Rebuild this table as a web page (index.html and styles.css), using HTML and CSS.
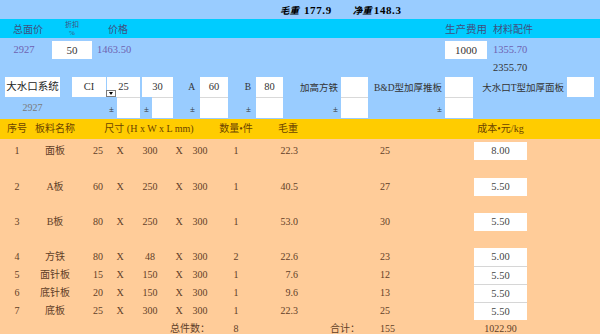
FILE: index.html
```html
<!DOCTYPE html>
<html lang="zh">
<head>
<meta charset="utf-8">
<title>模具报价</title>
<link rel="stylesheet" href="styles.css">
</head>
<body>
<div class="page">
  <div class="weights">
    <span class="wlabel">毛重</span><span class="wval">177.9</span>
    <span class="wlabel l2">净重</span><span class="wval">148.3</span>
  </div>

  <div class="pgrid price-head">
    <div class="c-total">总面价</div>
    <div class="c-disc"><span class="disc">折扣</span><span class="disc">%</span></div>
    <div class="c-price head-price">价格</div>
    <div class="c-prod">生产费用</div>
    <div class="c-mat">材料配件</div>
  </div>

  <div class="pgrid price-vals">
    <div class="c-total purple">2927</div>
    <div class="c-disc"><div class="box pbox w40">50</div></div>
    <div class="c-price purple">1463.50</div>
    <div class="c-prod"><div class="box pbox w42">1000</div></div>
    <div class="c-mat purple">1355.70</div>
  </div>

  <div class="pgrid price-sum">
    <div class="c-mat">2355.70</div>
  </div>

  <div class="form">
    <div class="fcell g1 r1"><div class="box sys">大水口系统</div></div>
    <div class="fcell g2 r1"><div class="box w34 sel">CI<span class="dd"></span></div></div>
    <div class="fcell g3 r1"><div class="box w33">25</div></div>
    <div class="fcell g4 r1"><div class="box w31">30</div></div>
    <div class="fcell g5 r1"><span class="lbl">A</span><div class="box w28">60</div></div>
    <div class="fcell g6 r1"><span class="lbl">B</span><div class="box w27">80</div></div>
    <div class="fcell g7 r1"><span class="lbl">加高方铁</span><div class="box w27"></div></div>
    <div class="fcell g8 r1"><span class="lbl">B&amp;D型加厚推板</span><div class="box w28"></div></div>
    <div class="fcell g9 r1"><span class="lbl">大水口T型加厚面板</span><div class="box w27"></div></div>

    <div class="fcell g1 r2 center"><span class="gray">2927</span></div>
    <div class="fcell g3 r2"><span class="pm">±</span><div class="box w23 lower"></div></div>
    <div class="fcell g4 r2"><span class="pm">±</span><div class="box w21 lower"></div></div>
    <div class="fcell g5 r2"><span class="pm">±</span><div class="box w28 lower"></div></div>
    <div class="fcell g6 r2"><span class="pm">±</span><div class="box w27 lower"></div></div>
    <div class="fcell g7 r2"><span class="pm">±</span><div class="box w27 lower"></div></div>
    <div class="fcell g8 r2"><span class="pm">±</span><div class="box w28 lower"></div></div>
  </div>

  <div class="tbl">
    <div class="trow thead">
      <div class="c1">序号</div>
      <div class="c2">板料名称</div>
      <div class="csize">尺寸 (H x W x L mm)</div>
      <div class="c9">数量•件</div>
      <div class="c10">毛重</div>
      <div class="c14">成本•元/kg</div>
    </div>

    <div class="trow tall h35">
      <div class="c1">1</div><div class="c2">面板</div>
      <div class="c4">25</div><div class="c5">X</div><div class="c6">300</div><div class="c7">X</div><div class="c8">300</div>
      <div class="c9">1</div><div class="c10">22.3</div><div class="c12">25</div>
      <div class="c14"><div class="cbox">8.00</div></div>
    </div>
    <div class="trow tall h36">
      <div class="c1">2</div><div class="c2">A板</div>
      <div class="c4">60</div><div class="c5">X</div><div class="c6">250</div><div class="c7">X</div><div class="c8">300</div>
      <div class="c9">1</div><div class="c10">40.5</div><div class="c12">27</div>
      <div class="c14"><div class="cbox">5.50</div></div>
    </div>
    <div class="trow tall h35">
      <div class="c1">3</div><div class="c2">B板</div>
      <div class="c4">80</div><div class="c5">X</div><div class="c6">250</div><div class="c7">X</div><div class="c8">300</div>
      <div class="c9">1</div><div class="c10">53.0</div><div class="c12">30</div>
      <div class="c14"><div class="cbox">5.50</div></div>
    </div>
    <div class="trow tall h21">
      <div class="c1">4</div><div class="c2">方铁</div>
      <div class="c4">80</div><div class="c5">X</div><div class="c6">48</div><div class="c7">X</div><div class="c8">300</div>
      <div class="c9">2</div><div class="c10">22.6</div><div class="c12">23</div>
      <div class="c14"><div class="cbox">5.00</div></div>
    </div>
    <div class="trow short">
      <div class="c1">5</div><div class="c2">面针板</div>
      <div class="c4">15</div><div class="c5">X</div><div class="c6">150</div><div class="c7">X</div><div class="c8">300</div>
      <div class="c9">1</div><div class="c10">7.6</div><div class="c12">12</div>
      <div class="c14"><div class="cbox sep">5.50</div></div>
    </div>
    <div class="trow short">
      <div class="c1">6</div><div class="c2">底针板</div>
      <div class="c4">20</div><div class="c5">X</div><div class="c6">150</div><div class="c7">X</div><div class="c8">300</div>
      <div class="c9">1</div><div class="c10">9.6</div><div class="c12">13</div>
      <div class="c14"><div class="cbox sep">5.50</div></div>
    </div>
    <div class="trow short">
      <div class="c1">7</div><div class="c2">底板</div>
      <div class="c4">25</div><div class="c5">X</div><div class="c6">300</div><div class="c7">X</div><div class="c8">300</div>
      <div class="c9">1</div><div class="c10">22.3</div><div class="c12">25</div>
      <div class="c14"><div class="cbox sep">5.50</div></div>
    </div>
    <div class="trow foot">
      <div class="ftotal">总件数：</div>
      <div class="c9">8</div>
      <div class="fsum">合计：</div>
      <div class="c12">155</div>
      <div class="c14">1022.90</div>
    </div>
  </div>
</div>
</body>
</html>
```

FILE: styles.css
```css
* {
  box-sizing: border-box;
  margin: 0;
  padding: 0;
}

html, body {
  width: 600px;
  height: 334px;
  overflow: hidden;
}

body {
  font-family: "Liberation Serif", "Noto Sans CJK SC", serif;
  font-size: 10px;
  color: #333;
  background: #99ccff;
}

.page {
  width: 600px;
}

/* top weights band */
.weights {
  height: 19px;
  display: flex;
  align-items: center;
  padding-left: 280px;
  font-weight: bold;
  font-size: 11px;
  color: #000;
}

.wlabel {
  font-style: italic;
  font-size: 9.5px;
  margin-right: 5px;
}

.wval {
  letter-spacing: 0.6px;
}

.wlabel.l2 {
  margin-left: 21px;
  margin-right: 2px;
}

/* price block */
.pgrid {
  display: grid;
  grid-template-columns: 52px 45px 348px 48px 1fr;
}

.c-total { grid-column: 1; text-align: center; }
.c-disc { grid-column: 2; }
.c-price { grid-column: 3; }
.c-prod { grid-column: 4; }
.c-mat { grid-column: 5; }

.price-head {
  height: 19px;
  background: #00ccff;
  align-items: center;
  color: #3f5080;
  font-size: 10px;
}

.price-head .c-total {
  padding-left: 4px;
}

.price-head .c-prod {
  font-size: 10.5px;
  white-space: nowrap;
}

.head-price {
  padding-left: 11px;
}

.price-head .c-disc {
  width: 40px;
  display: flex;
  flex-direction: column;
  align-items: center;
  line-height: 8px;
}

.disc {
  font-size: 7px;
}

.price-vals {
  height: 24px;
  padding-top: 3px;
  line-height: 18px;
  font-size: 10.5px;
}

.price-vals .c-total {
  padding-right: 4px;
}

.purple {
  color: #6f62b0;
}

.price-sum {
  height: 12px;
  line-height: 12px;
  font-size: 10.5px;
  color: #333;
}

.box {
  background: #fff;
  color: #333;
  text-align: center;
}

.pbox {
  height: 18px;
  line-height: 18px;
  font-size: 11px;
}

.w40 { width: 40px; }
.w42 { width: 42px; }
.w34 { width: 34px; }
.w33 { width: 33px; }
.w31 { width: 31px; }
.w28 { width: 28px; }
.w27 { width: 27px; }
.w23 { width: 23px; }
.w21 { width: 21px; }

/* form block */
.form {
  display: grid;
  grid-template-columns: 60px 46px 34px 33px 55px 55px 85px 105px 121px;
  grid-template-rows: 20px 21px;
  margin-top: 3px;
  margin-bottom: 1px;
}

.fcell {
  display: flex;
  justify-content: flex-end;
  align-items: stretch;
  gap: 3px;
}

.fcell .box {
  line-height: 20px;
  font-size: 10.5px;
}

.fcell .lbl,
.fcell .pm {
  align-self: center;
  white-space: nowrap;
  font-size: 9.5px;
  color: #333;
}

.fcell .pm {
  font-size: 9px;
  margin-top: 2px;
}

.g1 { grid-column: 1; }
.g2 { grid-column: 2; }
.g3 { grid-column: 3; }
.g4 { grid-column: 4; }
.g5 { grid-column: 5; gap: 5px; }
.g6 { grid-column: 6; gap: 5px; }
.g7 { grid-column: 7; }
.g8 { grid-column: 8; }
.g9 { grid-column: 9; }
.r1 { grid-row: 1; }
.r2 { grid-row: 2; }

.fcell.center {
  justify-content: center;
  padding-left: 5px;
}

.sys {
  width: 55px;
  font-size: 10.5px;
  color: #222;
}

.sel {
  position: relative;
}

.dd {
  position: absolute;
  right: -10px;
  bottom: 0;
  width: 10px;
  height: 7px;
  background: #fff;
  border: 1px solid #7a7a7a;
}

.dd::after {
  content: "";
  position: absolute;
  left: 2px;
  top: 1px;
  border-left: 2.5px solid transparent;
  border-right: 2.5px solid transparent;
  border-top: 3px solid #000;
}

.lower {
  border-top: 1px solid #d9d9d9;
}

.gray {
  color: #7a7a7a;
  align-self: center;
  font-size: 10px;
}

/* table */
.tbl {
  background: #ffcc99;
  color: #5f4028;
}

.trow {
  display: grid;
  grid-template-columns: 34px 42px 12px 20px 24px 36px 22px 20px 52px 36px 82px 40px 54px 53px 1fr;
  grid-template-rows: 18px;
  align-content: start;
  line-height: 18px;
  font-size: 10px;
  white-space: nowrap;
}

.trow > div {
  text-align: center;
}

.thead {
  height: 20px;
  padding-top: 1px;
  background: #ffcc00;
  color: #6b4300;
}

.tall {
  padding-top: 3px;
}

.h35 { height: 35px; }
.h36 { height: 36px; padding-top: 4px; }
.h21 { height: 21px; }

.short {
  height: 18px;
}

.foot {
  height: 14px;
}

.c1 { grid-column: 1; }
.c2 { grid-column: 2; }
.c4 { grid-column: 4; }
.c5 { grid-column: 5; }
.c6 { grid-column: 6; }
.c7 { grid-column: 7; }
.c8 { grid-column: 8; }
.c9 { grid-column: 9; }
.trow > .c10 { grid-column: 10; text-align: right; }
.trow > .c12 { grid-column: 12; text-align: left; }
.c14 { grid-column: 14; }
.trow > .csize { grid-column: 4 / 9; }

.trow > .ftotal {
  grid-column: 6 / 9;
  text-align: right;
}

.trow > .fsum {
  grid-column: 11;
  text-align: right;
  padding-right: 20px;
}

.cbox {
  height: 18px;
  background: #fff;
  color: #444;
  text-align: center;
  line-height: 18px;
  font-size: 10.5px;
}

.cbox.sep {
  border-top: 1px solid #d6d6d6;
  line-height: 17px;
}
```
